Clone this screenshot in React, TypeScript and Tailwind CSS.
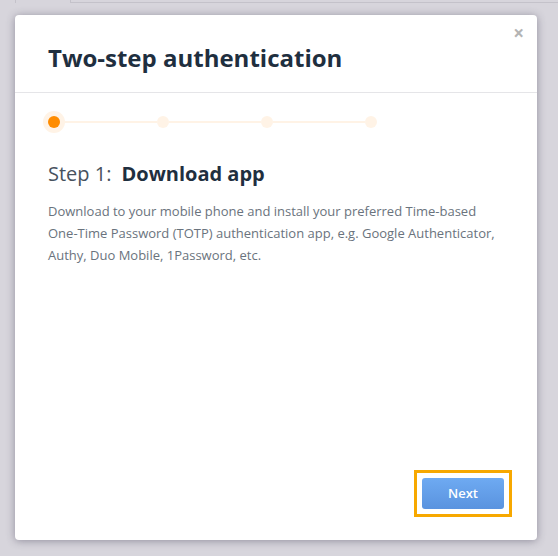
import React from "react";

export default function App() {
  return (
    <div
      className="relative w-[558px] h-[556px] bg-[#d7d5dc] overflow-hidden"
      style={{ fontFamily: '"Open Sans", "Liberation Sans", sans-serif' }}
    >
      <div className="absolute left-[70px] top-0 w-[500px] h-[3px] border-l border-b border-[#c4c2ca]" />
      <div className="absolute left-[15px] top-0 w-[1px] h-[3px] bg-[#c4c2ca]" />
      <div className="pl-[15px] pt-[15px]">
        <div className="relative w-[522px] h-[525px] bg-white rounded-[4px] shadow-[0_1px_8px_rgba(60,55,80,0.45)] flex flex-col">
          <button className="absolute right-[13px] top-[9px] text-[#b4b4b4] text-[19px] font-bold leading-none">
            ×
          </button>
          <div className="h-[78px] border-b border-[#e5e5e8] px-[33px] pt-[27px]">
            <h1 className="text-[24px] leading-[32px] font-bold text-[#1f2f3f]">
              Two-step authentication
            </h1>
          </div>
          <div className="px-[33px] flex-1 flex flex-col">
            <div className="mt-[23px] flex items-center h-[12px]">
              <div className="w-[12px] h-[12px] rounded-full bg-[#ff8c00] shadow-[0_0_0_5px_#fff3e6]" />
              <div className="w-[97px] h-[2px] bg-[#fff3e6]" />
              <div className="w-[12px] h-[12px] rounded-full bg-[#fff3e6]" />
              <div className="w-[92px] h-[2px] bg-[#fff3e6]" />
              <div className="w-[12px] h-[12px] rounded-full bg-[#fff3e6]" />
              <div className="w-[92px] h-[2px] bg-[#fff3e6]" />
              <div className="w-[12px] h-[12px] rounded-full bg-[#fff3e6]" />
            </div>
            <div className="mt-[32px] text-[20px] leading-[28px] text-[#47525e]">
              <span>Step 1:</span>
              <span className="ml-[10px] font-bold text-[#1f2f3f]">Download app</span>
            </div>
            <p className="mt-[12px] text-[13px] leading-[22px] text-[#6a737d]">
              Download to your mobile phone and install your preferred Time-based One-Time Password (TOTP) authentication app, e.g. Google Authenticator, Authy, Duo Mobile, 1Password, etc.
            </p>
            <div className="mt-auto mb-[23px] flex justify-end mr-[-8px]">
              <div className="border-[3px] border-[#f7a800] p-[5px]">
                <button className="w-[82px] h-[31px] rounded-[3px] bg-gradient-to-b from-[#6eaaf2] to-[#5a93df] text-white text-[13px] font-semibold">
                  Next
                </button>
              </div>
            </div>
          </div>
        </div>
      </div>
    </div>
  );
}
